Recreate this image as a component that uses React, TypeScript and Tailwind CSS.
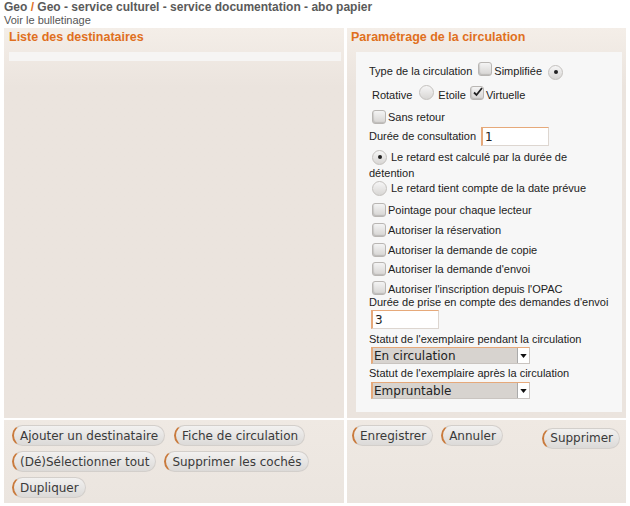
import React from "react";

function Checkbox({ checked = false }: { checked?: boolean }) {
    return (
        <span className="relative inline-block w-[14px] h-[14px] shrink-0 rounded-[3px] border border-[#b9b6b3] bg-linear-to-b from-[#f4f4f4] to-[#d6d4d2] shadow-[inset_1px_-1px_1px_rgba(0,0,0,0.12)]">
            {checked && (
                <svg
                    viewBox="0 0 14 14"
                    className="absolute left-[0px] top-[-2px] w-[14px] h-[14px]"
                >
                    <path
                        d="M3 7.5 L5.5 10 L11 3"
                        fill="none"
                        stroke="#222"
                        strokeWidth="1.8"
                    />
                </svg>
            )}
        </span>
    );
}

function Radio({ checked = false }: { checked?: boolean }) {
    return (
        <span className="inline-flex items-center justify-center w-[15px] h-[15px] shrink-0 rounded-full border border-[#c4c1be] bg-linear-to-b from-[#f6f6f6] to-[#d8d6d4]">
            {checked && (
                <span className="block w-[4px] h-[4px] rounded-full bg-[#222]" />
            )}
        </span>
    );
}

function Btn({ children }: { children: React.ReactNode }) {
    return (
        <button className="h-[21px] px-[6px] rounded-full border border-[#d3cfcb] border-l-[#c97a3c] border-l-2 bg-linear-to-b from-[#f2f1f0] to-[#dcdad8] text-[12px] leading-none text-[#3a3a3a] font-['DejaVu_Sans',sans-serif] whitespace-nowrap">
            {children}
        </button>
    );
}

function TextInput({ value, width }: { value: string; width: string }) {
    return (
        <span
            className={`inline-flex items-center h-[19px] ${width} bg-white border border-[#ddd6d0] border-t-[#e6a97a] border-l-[#e6a97a] border-l-2 pl-[2px] text-[12px] text-[#222] font-['DejaVu_Sans',sans-serif]`}
        >
            {value}
        </span>
    );
}

function Select({ value }: { value: string }) {
    return (
        <span className="flex items-center w-[159px] h-[17px] bg-[#d7d3cf] border border-[#c9c4c0] border-t-[#e6a97a] border-l-[#e6a97a] border-l-2 text-[12px] text-[#222] font-['DejaVu_Sans',sans-serif]">
            <span className="flex-1 pl-[1px] leading-none">{value}</span>
            <span className="flex items-center justify-center w-[12px] h-[15px] bg-white border-l border-[#aaa]">
                <svg viewBox="0 0 8 5" className="w-[7px] h-[4px]">
                    <path d="M0 0 L8 0 L4 5 Z" fill="#111" />
                </svg>
            </span>
        </span>
    );
}

export default function App() {
    return (
        <div className="w-[630px] h-[506px] bg-white font-['Liberation_Sans',Arial,sans-serif] text-[#222] overflow-hidden">
            <div className="px-[4px] pt-[1px]">
                <div className="text-[12px] leading-[13px] font-bold text-[#5a5a5a]">
                    Geo <span className="text-[#e0701e]">/</span> Geo - service
                    culturel - service documentation - abo papier
                </div>
                <div className="text-[11px] leading-[12px] text-[#555]">
                    Voir le bulletinage
                </div>
            </div>

            <div className="mt-[2px] mx-[4px] grid grid-cols-[340px_279px] gap-x-[3px] gap-y-[2px]">
                {/* top left */}
                <div className="h-[390px] bg-linear-to-b from-[#f4eee8] to-[#ebe4de] to-[15%]">
                    <div className="pl-[5px] pt-[1px] h-[24px] text-[12.5px] leading-[16px] font-bold text-[#e0701e]">
                        Liste des destinataires
                    </div>
                    <div className="ml-[5px] mr-[3px] h-[9px] bg-[#f6f5f4]" />
                </div>

                {/* top right */}
                <div className="h-[390px] bg-linear-to-b from-[#f4eee8] to-[#ebe4de] to-[15%] flex flex-col">
                    <div className="pl-[4px] pt-[1px] h-[24px] text-[12.5px] leading-[16px] font-bold text-[#e0701e]">
                        Paramétrage de la circulation
                    </div>
                    <div className="ml-[9px] mr-[4px] h-[360px] bg-[#f7f7f7] pl-[13px] pt-[10px] text-[11px] text-[#222] flex flex-col">
                        <div className="h-[18px] flex items-center">
                            <span>Type de la circulation</span>
                            <span className="ml-[6px]">
                                <Checkbox />
                            </span>
                            <span className="ml-[2px]">Simplifiée</span>
                            <span className="ml-[6px]">
                                <Radio checked />
                            </span>
                        </div>
                        <div className="mt-[6px] h-[18px] flex items-center pl-[3px]">
                            <span>Rotative</span>
                            <span className="ml-[7px]">
                                <Radio />
                            </span>
                            <span className="ml-[4px]">Etoile</span>
                            <span className="ml-[4px]">
                                <Checkbox checked />
                            </span>
                            <span className="ml-[2px]">Virtuelle</span>
                        </div>
                        <div className="mt-[4px] h-[18px] flex items-center pl-[3px]">
                            <Checkbox />
                            <span className="ml-[2px]">Sans retour</span>
                        </div>
                        <div className="mt-[1px] h-[19px] flex items-center">
                            <span>Durée de consultation</span>
                            <span className="ml-[5px]">
                                <TextInput value="1" width="w-[68px]" />
                            </span>
                        </div>
                        <div className="mt-[3px] leading-[16px]">
                            <div className="flex items-center pl-[3px]">
                                <Radio checked />
                                <span className="ml-[4px]">
                                    Le retard est calculé par la durée de
                                </span>
                            </div>
                            <div>détention</div>
                        </div>
                        <div className="h-[15px] flex items-center pl-[3px]">
                            <Radio />
                            <span className="ml-[4px]">
                                Le retard tient compte de la date prévue
                            </span>
                        </div>
                        <div className="mt-[5px] h-[18px] flex items-center pl-[3px]">
                            <Checkbox />
                            <span className="ml-[2px]">Pointage pour chaque lecteur</span>
                        </div>
                        <div className="mt-[2px] h-[18px] flex items-center pl-[3px]">
                            <Checkbox />
                            <span className="ml-[2px]">Autoriser la réservation</span>
                        </div>
                        <div className="mt-[2px] h-[18px] flex items-center pl-[3px]">
                            <Checkbox />
                            <span className="ml-[2px]">Autoriser la demande de copie</span>
                        </div>
                        <div className="mt-[1px] h-[18px] flex items-center pl-[3px]">
                            <Checkbox />
                            <span className="ml-[2px]">Autoriser la demande d'envoi</span>
                        </div>
                        <div className="mt-[1px] h-[17px] flex items-center pl-[3px]">
                            <Checkbox />
                            <span className="ml-[2px] self-end leading-[13px]">
                                Autoriser l'inscription depuis l'OPAC
                            </span>
                        </div>
                        <div className="h-[13px] leading-[13px]">
                            Durée de prise en compte des demandes d'envoi
                        </div>
                        <div className="mt-[1px] pl-[2px]">
                            <TextInput value="3" width="w-[68px]" />
                        </div>
                        <div className="mt-[4px] h-[13px] leading-[13px]">
                            Statut de l'exemplaire pendant la circulation
                        </div>
                        <div className="mt-[1px] pl-[2px]">
                            <Select value="En circulation" />
                        </div>
                        <div className="mt-[3px] h-[13px] leading-[13px]">
                            Statut de l'exemplaire après la circulation
                        </div>
                        <div className="mt-[2px] pl-[2px]">
                            <Select value="Empruntable" />
                        </div>
                    </div>
                </div>

                {/* bottom left */}
                <div className="h-[83px] bg-linear-to-b from-[#efe9e3] to-[#ebe5df] pl-[8px] pt-[5px] flex flex-col gap-[5px]">
                    <div className="flex gap-[9px]">
                        <Btn>Ajouter un destinataire</Btn>
                        <Btn>Fiche de circulation</Btn>
                    </div>
                    <div className="flex gap-[8px]">
                        <Btn>(Dé)Sélectionner tout</Btn>
                        <Btn>Supprimer les cochés</Btn>
                    </div>
                    <div className="flex">
                        <Btn>Dupliquer</Btn>
                    </div>
                </div>

                {/* bottom right */}
                <div className="h-[83px] bg-linear-to-b from-[#efe9e3] to-[#ebe5df] pl-[5px] pr-[6px] pt-[5px] flex items-start gap-[8px]">
                    <Btn>Enregistrer</Btn>
                    <Btn>Annuler</Btn>
                    <span className="ml-auto">
                        <Btn>Supprimer</Btn>
                    </span>
                </div>
            </div>
        </div>
    );
}
